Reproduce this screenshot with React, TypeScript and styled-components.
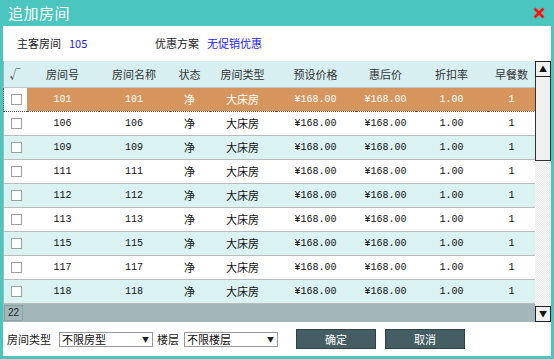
import { createGlobalStyle } from 'styled-components';
import styled from 'styled-components';

const GlobalStyle = createGlobalStyle`
  html, body {
    margin: 0;
    padding: 0;
    background: #ffffff;
  }
  * {
    box-sizing: border-box;
  }
`;

const CJK = `"Noto Sans CJK SC", "Microsoft YaHei", sans-serif`;
const MONO = `"Liberation Mono", "Noto Sans CJK SC", monospace`;

interface Room {
  no: string;
  selected?: boolean;
}

const rooms: Room[] = [
  { no: '101', selected: true },
  { no: '106' },
  { no: '109' },
  { no: '111' },
  { no: '112' },
  { no: '113' },
  { no: '115' },
  { no: '117' },
  { no: '118' },
];

const columns = [
  { title: '√', width: 23 },
  { title: '房间号', width: 72 },
  { title: '房间名称', width: 71 },
  { title: '状态', width: 40 },
  { title: '房间类型', width: 66 },
  { title: '预设价格', width: 80 },
  { title: '惠后价', width: 60 },
  { title: '折扣率', width: 72 },
  { title: '早餐数', width: 48 },
];

const App = () => (
  <>
    <GlobalStyle />
    <Window>
      <TitleBar>
        <Title>追加房间</Title>
        <CloseIcon width="12" height="12" viewBox="0 0 12 12">
          <path d="M1.5 1.5 L10.5 10.5 M10.5 1.5 L1.5 10.5" stroke="#ff1010" strokeWidth="2.6" />
        </CloseIcon>
      </TitleBar>
      <Body>
        <InfoRow>
          <Label>主客房间</Label>
          <Value $w={78}>105</Value>
          <Label>优惠方案</Label>
          <Value>无促销优惠</Value>
        </InfoRow>
        <GridArea>
          <TableWrap>
            <Table>
              <colgroup>
                {columns.map((c) => (
                  <col key={c.title} style={{ width: c.width }} />
                ))}
              </colgroup>
              <thead>
                <tr>
                  {columns.map((c) => (
                    <Th key={c.title}>{c.title}</Th>
                  ))}
                </tr>
              </thead>
              <tbody>
                {rooms.map((r, i) => (
                  <Row key={r.no} $selected={!!r.selected} $alt={i % 2 === 1}>
                    <CheckCell $selected={!!r.selected}>
                      <Box />
                    </CheckCell>
                    <Num>{r.no}</Num>
                    <Num>{r.no}</Num>
                    <Txt>净</Txt>
                    <Txt>大床房</Txt>
                    <Num>¥168.00</Num>
                    <Num>¥168.00</Num>
                    <Num>1.00</Num>
                    <Num>1</Num>
                  </Row>
                ))}
              </tbody>
            </Table>
            <CountBar>
              <Count>22</Count>
            </CountBar>
          </TableWrap>
          <ScrollBar>
            <Arrow>▲</Arrow>
            <Thumb />
            <Track />
            <Arrow>▼</Arrow>
          </ScrollBar>
        </GridArea>
        <Footer>
          <Field $gap={8}>
            <Label>房间类型</Label>
            <Select $w={94}>
              <span>不限房型</span>
              <Caret>▼</Caret>
            </Select>
          </Field>
          <Field $gap={5}>
            <Label>楼层</Label>
            <Select $w={94}>
              <span>不限楼层</span>
              <Caret>▼</Caret>
            </Select>
          </Field>
          <Buttons>
            <Button>确定</Button>
            <Button>取消</Button>
          </Buttons>
        </Footer>
      </Body>
    </Window>
  </>
);

const Window = styled.div`
  width: 554px;
  height: 359px;
  background: #4bc6bf;
  padding: 0 3px 3px 3px;
  display: flex;
  flex-direction: column;
  font-family: ${CJK};
`;

const TitleBar = styled.div`
  height: 26px;
  display: flex;
  align-items: center;
  justify-content: space-between;
  padding: 0 6px 2px 5px;
`;

const Title = styled.div`
  color: #ffffff;
  font-size: 15px;
  letter-spacing: 0.5px;
`;

const CloseIcon = styled.svg`
  display: block;
  margin-top: 2px;
`;

const Body = styled.div`
  flex: 1;
  background: #ffffff;
  display: flex;
  flex-direction: column;
`;

const InfoRow = styled.div`
  height: 35px;
  display: flex;
  align-items: center;
  padding: 0 0 2px 14px;
  gap: 8px;
`;

const Label = styled.span`
  font-size: 11px;
  color: #222;
  white-space: nowrap;
`;

const Value = styled.span<{ $w?: number }>`
  font-size: 11px;
  color: #1a1aff;
  width: ${({ $w }) => ($w ? `${$w}px` : 'auto')};
`;

const GridArea = styled.div`
  display: flex;
  height: 261px;
`;

const TableWrap = styled.div`
  width: 532px;
  display: flex;
  flex-direction: column;
  background: #a3b7ba;
`;

const Table = styled.table`
  width: 532px;
  border-collapse: collapse;
  table-layout: fixed;
`;

const Th = styled.th`
  height: 26px;
  background: #d7eff1;
  font-weight: normal;
  font-size: 11px;
  color: #333;
  text-align: center;
  padding: 0;
  border-bottom: 1px solid #b8c8ca;
`;

const Row = styled.tr<{ $selected: boolean; $alt: boolean }>`
  height: 24px;
  background: ${({ $selected, $alt }) =>
    $selected ? '#d6955c' : $alt ? '#ffffff' : '#dbf2f3'};
  color: ${({ $selected }) => ($selected ? '#ffffff' : '#111')};
  td {
    border-bottom: 1px solid #b9bcbc;
    ${({ $selected }) =>
      $selected
        ? 'border-top: 1px dotted #555; border-bottom: 1px dotted #555;'
        : ''}
  }
`;

const CheckCell = styled.td<{ $selected: boolean }>`
  padding: 0 0 0 7px;
  background: ${({ $selected }) => ($selected ? '#ffffff' : 'transparent')};
  ${({ $selected }) => ($selected ? 'border-left: 1px dotted #555;' : '')}
`;

const Box = styled.div`
  width: 11px;
  height: 11px;
  border: 1px solid #a0a0a0;
  background: #ffffff;
`;

const Num = styled.td`
  font-family: ${MONO};
  font-size: 10px;
  text-align: center;
  padding: 0;
  white-space: nowrap;
`;

const Txt = styled.td`
  font-size: 11px;
  text-align: center;
  padding: 0;
`;

const CountBar = styled.div`
  height: 19px;
  display: flex;
  align-items: center;
  padding-left: 1px;
`;

const Count = styled.div`
  border: 1px solid #8fa3a5;
  font-family: "Liberation Sans", sans-serif;
  font-size: 10px;
  color: #222;
  padding: 1px 3px;
  line-height: 12px;
`;

const ScrollBar = styled.div`
  width: 16px;
  display: flex;
  flex-direction: column;
  background-color: #f3f3f3;
  background-image: repeating-conic-gradient(#e9e9e9 0 25%, #f8f8f8 0 50%);
  background-size: 2px 2px;
`;

const Arrow = styled.div`
  height: 16px;
  border: 1px solid #222;
  background: #f0f0f0;
  font-size: 8px;
  line-height: 14px;
  text-align: center;
  color: #111;
`;

const Thumb = styled.div`
  height: 84px;
  border: 1px solid #333;
  border-top: none;
  background: #f0f0f0;
`;

const Track = styled.div`
  flex: 1;
`;

const Footer = styled.div`
  flex: 1;
  display: flex;
  align-items: center;
  padding: 0 0 0 4px;
  gap: 4px;
`;

const Field = styled.div<{ $gap: number }>`
  display: flex;
  align-items: center;
  gap: ${({ $gap }) => `${$gap}px`};
`;

const Select = styled.div<{ $w: number }>`
  width: ${({ $w }) => `${$w}px`};
  height: 15px;
  border: 1px solid #999;
  display: flex;
  align-items: center;
  justify-content: space-between;
  font-size: 11px;
  color: #111;
  padding: 0 3px 0 2px;
`;

const Caret = styled.span`
  font-size: 7px;
  color: #222;
`;

const Buttons = styled.div`
  display: flex;
  gap: 9px;
  margin-left: 14px;
`;

const Button = styled.button`
  width: 80px;
  height: 20px;
  background: #445e63;
  color: #ffffff;
  border: 1px solid #2f4347;
  font-family: ${CJK};
  font-size: 11px;
  padding: 0;
`;

export default App;
